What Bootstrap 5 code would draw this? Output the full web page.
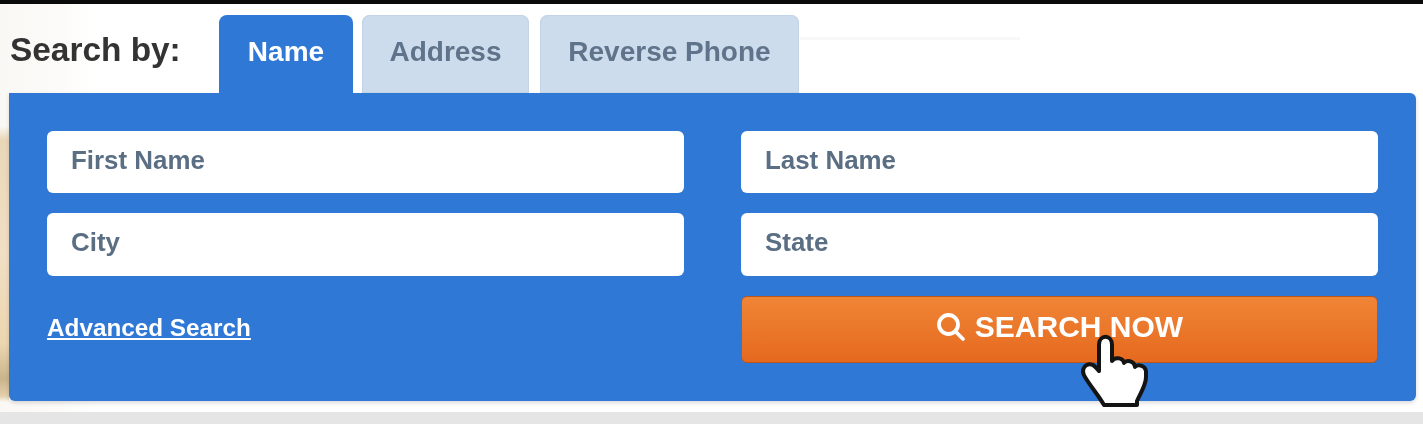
<!doctype html>
<html lang="en">
<head>
<meta charset="utf-8">
<title>Search by</title>
<link href="https://cdn.jsdelivr.net/npm/bootstrap@5.3.0/dist/css/bootstrap.min.css" rel="stylesheet">
<style>
html,body{height:424px;overflow:hidden;background:#e5e5e5;font-family:"Liberation Sans",Arial,sans-serif}
.shot{filter:blur(.7px);height:424px;display:flex;flex-direction:column}
.topbar{height:4px;background:#0a0a0a;flex:none}
.stage{height:408px;flex:none;padding:11px 7px 0 9px;position:relative;
 background:
 linear-gradient(180deg,rgba(232,212,176,0) 122px,#e9d7b8 136px,#f0dfc4 250px,#ecd6b0 340px,#c9b48c 375px,#e3d0ac 392px,rgba(232,212,176,0) 398px) left top/9px 100% no-repeat,
 linear-gradient(#f8f8f8,#f8f8f8) 800px 33px/220px 3px no-repeat,
 linear-gradient(90deg,#f9f8f4 0,#fcfbf9 60px,#fff 95px) left top/95px 100% no-repeat,
 #fff}
.search-label{font-size:33.4px;font-weight:700;color:#333;line-height:1;margin:0;width:210px;padding:18px 0 0 1px;align-self:flex-start}
.tabstrip{height:78px;align-items:stretch;flex-wrap:nowrap}
.tabstrip .nav-link{height:78px;font-size:28px;font-weight:700;line-height:73px;padding:0;text-align:center;border-radius:8px 8px 0 0;background:#cddced;color:#5f748b;box-shadow:inset 0 0 0 1px #c3d3e6}
.tabstrip .nav-link.active{background:#2f78d6;color:#fff;box-shadow:none}
.tab-name{width:134px;margin-right:9px}
.tab-addr{width:167px;margin-right:11px}
.tab-phone{width:259px}
.panel-blue{background:#2f78d6;border-radius:6px;border-top-left-radius:0;padding:38px;height:308px;box-shadow:0 2px 4px rgba(0,0,0,.15)}
.panel-blue .row{--bs-gutter-x:57px;--bs-gutter-y:20px}
.field{height:62.3px;border:0;border-radius:6px;font-size:25.9px;font-weight:700;padding:0 24px 4px;font-family:inherit}
.field::placeholder{color:#5a6e84;opacity:1}
.adv-link{color:#fff;font-size:24.3px;font-weight:700;line-height:1;margin-bottom:2px}
.go-btn{height:67px;width:100%;border:1px solid #b9561a;border-radius:6px;color:#fff;font-size:30px;font-weight:700;background:linear-gradient(180deg,#f08536,#e5691f);padding:0 0 5px;display:flex;align-items:center;justify-content:center;gap:9px}
.go-btn:hover{color:#fff}
.hand{position:absolute;left:1070px;top:321px;width:90px;height:90px;pointer-events:none}
</style>
</head>
<body>
<div class="shot">
 <div class="topbar"></div>
 <div class="stage">
  <div class="d-flex">
   <p class="search-label">Search by:</p>
   <ul class="nav tabstrip">
    <li class="nav-item"><a class="nav-link active tab-name" href="#">Name</a></li>
    <li class="nav-item"><a class="nav-link tab-addr" href="#">Address</a></li>
    <li class="nav-item"><a class="nav-link tab-phone" href="#">Reverse Phone</a></li>
   </ul>
  </div>
  <form class="panel-blue">
   <div class="row">
    <div class="col-6"><input class="form-control field" placeholder="First Name"></div>
    <div class="col-6"><input class="form-control field" placeholder="Last Name"></div>
    <div class="col-6"><input class="form-control field" placeholder="City"></div>
    <div class="col-6"><input class="form-control field" placeholder="State"></div>
    <div class="col-6 d-flex align-items-center"><a class="adv-link" href="#">Advanced Search</a></div>
    <div class="col-6">
     <button type="button" class="btn go-btn">
      <svg width="30" height="30" viewBox="0 0 30 30" fill="none" stroke="#fff" stroke-width="3.8" stroke-linecap="round" aria-hidden="true"><circle cx="12.5" cy="12.5" r="9.5"/><path d="M19.5 19.5 27 27"/></svg>
      <span>SEARCH NOW</span>
     </button>
    </div>
   </div>
  </form>
  <svg class="hand" viewBox="0 0 90 90" aria-hidden="true"><path d="M29 20C29 9 42 9 42 20L42 36C44 32 53 32 54 38C56 35 64 35 65 42C67 39 75 40 76 46L76 52C76 60 71 67 67 76L67 80L34 80C29 71 21 62 15 52C10 44 16 37 23 40C26 42 27 44 29 46Z" fill="#fff" stroke="#141414" stroke-width="4" stroke-linejoin="round"/></svg>
 </div>
 <div class="flex-grow-1"></div>
</div>
</body>
</html>
